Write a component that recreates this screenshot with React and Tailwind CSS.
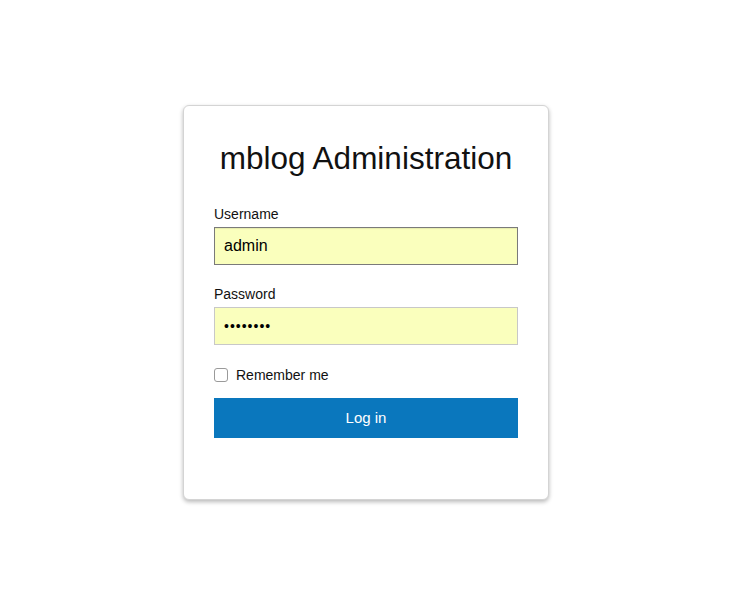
export default function App() {
  return (
    <div
      className="min-h-[597px] w-full bg-white pt-[105px] pl-[183px]"
      style={{ fontFamily: '"Liberation Sans", Arial, Helvetica, sans-serif' }}
    >
      <div className="w-[366px] rounded-[6px] border border-[#d4d4d4] bg-white px-[30px] pt-[34px] pb-[61px] shadow-[0_2px_4px_rgba(0,0,0,0.28)]">
        <h1 className="text-center text-[31.5px] leading-[36px] font-normal text-[#111]">
          mblog Administration
        </h1>
        <form className="mt-[28px]" onSubmit={(e) => e.preventDefault()}>
          <label className="block text-[14px] leading-[20px] text-[#111]">Username</label>
          <input
            type="text"
            defaultValue="admin"
            className="mt-[3px] block h-[38px] w-full border border-[#7a7a7a] bg-[#faffbd] px-[9px] text-[16px] text-black outline-none shadow-[inset_0_1px_1px_rgba(0,0,0,0.08)]"
          />
          <label className="mt-[19px] block text-[14px] leading-[20px] text-[#111]">Password</label>
          <input
            type="password"
            defaultValue="password"
            className="mt-[3px] block h-[38px] w-full border border-[#c8c8c8] bg-[#faffbd] px-[9px] text-[14px] tracking-[1px] text-black outline-none"
          />
          <div className="mt-[22px] flex items-center">
            <span className="block h-[14px] w-[14px] rounded-[3px] border border-[#9a9a9a] bg-white" />
            <span className="ml-[8px] text-[14px] leading-[16px] text-[#111]">Remember me</span>
          </div>
          <button
            type="submit"
            className="mt-[15px] block h-[40px] w-full bg-[#0a77bd] text-[15px] text-white"
          >
            Log in
          </button>
        </form>
      </div>
    </div>
  );
}
